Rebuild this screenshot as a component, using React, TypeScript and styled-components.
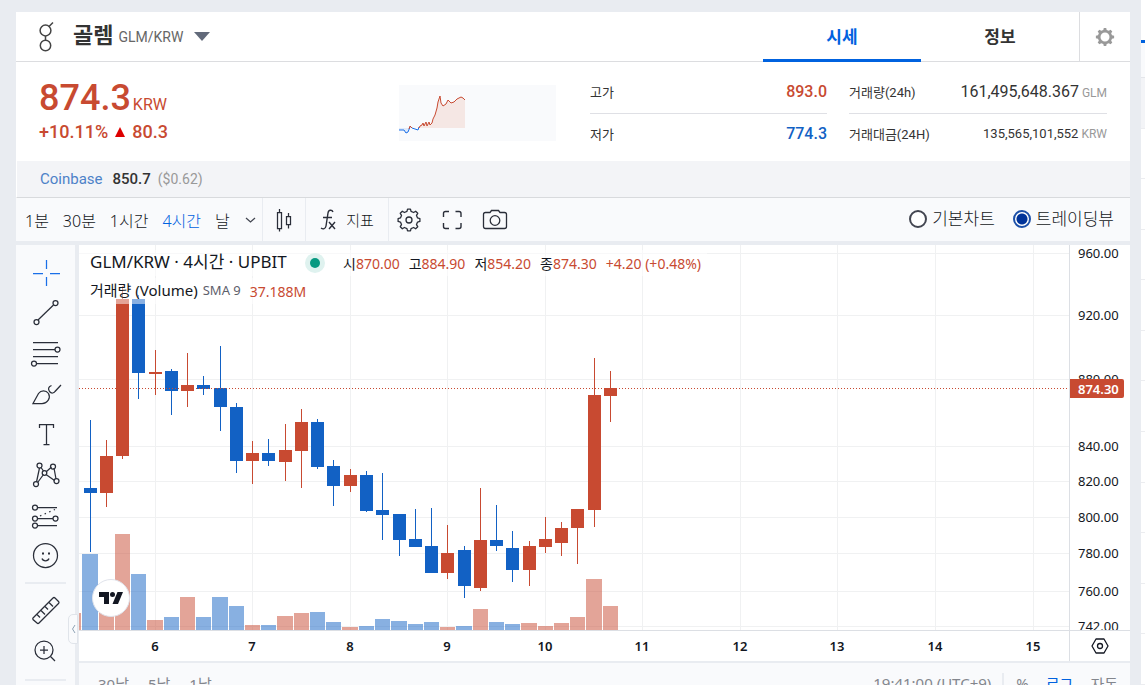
import React from 'react';
import styled, { createGlobalStyle } from 'styled-components';

const RED = '#c84a31';
const BLUE = '#1261c4';
const ROBOTO = `Roboto, "Noto Sans CJK KR", sans-serif`;
const CHART_FONT = `"Noto Sans", "Noto Sans CJK KR", sans-serif`;

const GlobalStyle = createGlobalStyle`
  *, *::before, *::after { box-sizing: border-box; }
  body { margin: 0; background: #e9ecf1; font-family: ${ROBOTO}; color: #333; }
  button { font: inherit; color: inherit; background: none; border: 0; padding: 0; cursor: pointer; }
  svg { display: block; flex: none; }
`;

const Page = styled.div`
  display: flex;
  gap: 11px;
  height: 100vh;
  padding-left: 16px;
  overflow: hidden;
`;

const Main = styled.main`
  flex: 1;
  min-width: 0;
  margin-top: 12px;
`;

/* ---------- header ---------- */

const Header = styled.header`
  display: flex;
  height: 50px;
  background: #fff;
  border-bottom: 1px solid #dcdde0;
`;

const CoinButton = styled.button`
  display: flex;
  align-items: center;
  height: 49px;
  padding-left: 20px;
  margin-right: auto;
`;

const CoinName = styled.strong`
  margin: 0 5px 2px 17px;
  font-size: 22px;
  line-height: 28px;
  font-weight: 700;
  color: #333;
`;

const CoinPair = styled.span`
  margin-right: 11px;
  font-size: 14px;
  color: #666;
`;

const Tabs = styled.nav`
  display: flex;
`;

const Tab = styled.button<{ $active?: boolean }>`
  width: 158px;
  height: 50px;
  font-size: 17px;
  font-weight: 700;
  color: ${(p) => (p.$active ? '#0062df' : '#333')};
  border-bottom: 3px solid ${(p) => (p.$active ? '#0062df' : 'transparent')};
`;

const SettingsButton = styled.button`
  display: flex;
  align-items: center;
  justify-content: center;
  width: 51px;
  height: 49px;
  border-left: 1px solid #dcdde0;
`;

/* ---------- price summary ---------- */

const Summary = styled.section`
  display: flex;
  height: 99px;
  padding: 0 23px;
  background: #fff;
`;

const PriceBlock = styled.div`
  flex: 1;
  padding-top: 15px;
  color: ${RED};
  white-space: nowrap;
`;

const Price = styled.div`
  font-size: 36px;
  line-height: 42px;
  font-weight: 500;
`;

const Unit = styled.span`
  margin-left: 2px;
  font-size: 16px;
  line-height: 16px;
  font-weight: 400;
`;

const Change = styled.div`
  display: flex;
  align-items: center;
  gap: 7px;
  font-size: 18px;
  line-height: 26px;
  font-weight: 500;
`;

const SparkBox = styled.div`
  width: 157px;
  height: 56px;
  margin-top: 23px;
  background: #f9fafc;
`;

const Stats = styled.dl<{ $width: number; $gap: number }>`
  width: ${(p) => p.$width}px;
  margin: 10px 0 0 ${(p) => p.$gap}px;
`;

const Stat = styled.div`
  display: flex;
  align-items: center;
  justify-content: space-between;
  height: 42px;
  padding-bottom: 3px;
  &:first-child { border-bottom: 1px solid #dfe0e5; }
`;

const StatName = styled.dt`
  font-size: 13px;
  color: #333;
`;

const StatValue = styled.dd<{ $color?: string; $small?: boolean }>`
  margin: 0;
  font-size: ${(p) => (p.$small ? 13 : 16)}px;
  font-weight: ${(p) => (p.$color ? 500 : 400)};
  color: ${(p) => p.$color ?? '#333'};
`;

const StatUnit = styled.small`
  margin-left: 3px;
  font-size: 12px;
  color: #999;
`;

const Reference = styled.div`
  display: flex;
  align-items: center;
  height: 37px;
  padding-left: 23px;
  background: #f3f4f7;
  border-left: 1px solid #fff;
  border-bottom: 1px solid #d8dadd;
  font-size: 15px;
`;

const Exchange = styled.a`
  color: #4d82c8;
  font-size: 15px;
  text-decoration: none;
`;

const RefPrice = styled.b`
  margin: 0 7px 0 10px;
  font-weight: 500;
  font-size: 15px;
`;

const RefUsd = styled.span`
  font-size: 14px;
  color: #999;
`;

/* ---------- chart toolbar ---------- */

const Toolbar = styled.div`
  display: flex;
  align-items: center;
  height: 43px;
  background: #f9fafc;
  font-family: ${CHART_FONT};
  font-size: 16px;
  font-weight: 300;
  color: #131722;
`;

const Intervals = styled.div`
  display: flex;
  align-items: center;
  gap: 14px;
  width: 246px;
  padding-left: 9px;
  white-space: nowrap;
`;

const Interval = styled.button<{ $active?: boolean }>`
  color: ${(p) => (p.$active ? '#0062df' : '#131722')};
`;

const ToolGroup = styled.div<{ $width: number }>`
  display: flex;
  align-items: center;
  justify-content: center;
  gap: 12px;
  width: ${(p) => p.$width}px;
  height: 43px;
  border-left: 1px solid #e9ecf1;
`;

const ToolButton = styled.button`
  display: flex;
  align-items: center;
  gap: 9px;
  font-size: 15px;
`;

const ChartModes = styled.div`
  display: flex;
  gap: 18px;
  margin-left: auto;
  padding-right: 16px;
`;

const Mode = styled.label`
  display: flex;
  align-items: center;
  gap: 5px;
  font-size: 17px;
  line-height: 20px;
  padding-bottom: 2px;
  white-space: nowrap;
`;

const Radio = styled.input`
  appearance: none;
  width: 18px;
  height: 18px;
  margin: 0;
  border: 2px solid #434651;
  border-radius: 50%;
  background: #fff;
  &:checked {
    border-color: #1b4fa8;
    background: radial-gradient(circle, #003399 5px, #fff 6px);
  }
`;

/* ---------- chart ---------- */

const Workspace = styled.div`
  display: flex;
  align-items: flex-start;
  gap: 4px;
  margin-top: 4px;
`;

const Rail = styled.div`
  position: relative;
  display: flex;
  flex-direction: column;
  width: 59px;
  height: 480px;
  padding-top: 8px;
  background: #f9fafc;
`;

const RailButton = styled.button`
  width: 59px;
  height: 40px;
`;

const RailRule = styled.hr`
  width: 41px;
  height: 2px;
  margin: 9px 0 6px 9px;
  border: 0;
  background: #e9ecf1;
`;

const Collapse = styled.button`
  position: absolute;
  left: 52px;
  top: 369px;
  display: flex;
  align-items: center;
  justify-content: center;
  width: 10px;
  height: 30px;
  border: 1px solid #e0e4ea;
  border-radius: 5px 0 0 5px;
  background: #f9fafc;
`;

const ChartColumn = styled.div`
  flex: 1;
  min-width: 0;
  font-family: ${CHART_FONT};
`;

const ChartGrid = styled.div`
  position: relative;
  display: grid;
  grid-template-columns: minmax(0, 1fr) 61px;
  grid-template-rows: 385px 31px;
  background: #fff;
`;

const PriceAxis = styled.div`
  border-left: 1px solid #dcdfe4;
`;

const TimeAxis = styled.div`
  border-top: 1px solid #dcdfe4;
`;

const AxisCorner = styled.button`
  display: flex;
  align-items: center;
  justify-content: center;
  border-top: 1px solid #dcdfe4;
  border-left: 1px solid #dcdfe4;
`;

const Legend = styled.div`
  position: absolute;
  left: 0;
  top: 5px;
  display: flex;
  flex-direction: column;
  align-items: flex-start;
  gap: 2px;
  white-space: nowrap;
  color: #131722;
`;

const LegendRow = styled.div`
  display: flex;
  align-items: center;
  height: 26px;
  padding: 0 6px 0 11px;
  background: rgba(255, 255, 255, 0.5);
  font-size: 14px;
`;

const Symbol = styled.span`
  width: 215px;
  padding-bottom: 2px;
  font-size: 17px;
  line-height: 22px;
`;

const Ohlc = styled.span`
  display: flex;
  align-items: baseline;
  gap: 9px;
  margin-left: 18px;
`;

const Red = styled.span`
  color: ${RED};
`;

const StudyName = styled.span`
  font-size: 15px;
  line-height: 20px;
  padding-bottom: 2px;
`;

const Indicator = styled.span`
  margin: 0 9px 3px 5px;
  font-size: 13px;
  color: #5d606b;
`;

const Watermark = styled.a`
  position: absolute;
  left: 13px;
  top: 334px;
  display: flex;
  align-items: center;
  justify-content: center;
  width: 38px;
  height: 38px;
  border: 1px solid #e0e3eb;
  border-radius: 50%;
  background: #fff;
`;

const Footer = styled.footer`
  display: flex;
  align-items: center;
  height: 42px;
  padding: 0 12px 0 19px;
  background: #f9fafc;
  border-top: 2px solid #e9ecf1;
  font-size: 15px;
  color: #83868d;
  white-space: nowrap;
`;

const Ranges = styled.div`
  display: flex;
  gap: 19px;
  margin-right: auto;
`;

const Scales = styled.div`
  display: flex;
  gap: 17px;
  margin-left: 11px;
  padding-left: 12px;
  border-left: 2px solid #e9ecf1;
`;

const ScaleButton = styled.button<{ $active?: boolean }>`
  color: ${(p) => (p.$active ? '#0062df' : 'inherit')};
`;

/* ---------- market list at the right edge ---------- */

const Market = styled.aside`
  display: flex;
  flex-direction: column;
  flex: 0 0 4px;
  background: #fff;
`;

const MarketTab = styled.div`
  height: 43px;
  border-bottom: 3px solid #0062df;
`;

const MarketFilter = styled.div`
  height: 35px;
  background: #f9fafc;
  border-bottom: 1px solid #e4e6ea;
`;

const MarketRow = styled.div<{ $current?: boolean }>`
  flex: 1;
  background: ${(p) => (p.$current ? '#f3f4f7' : '#fff')};
  border-bottom: 1px solid #ecedf0;
`;

/* ---------- data ---------- */

type Candle = [x: number, up: 0 | 1, high: number, top: number, bottom: number, low: number, volume: number];

// x centre, direction, wick top, body top, body bottom, wick bottom, volume bar top
const CANDLES: Candle[] = [
  [11, 0, 175, 243, 248, 307, 309],
  [27, 1, 195, 211, 248, 262, 357],
  [43, 1, 41, 54, 211, 214, 289],
  [59, 0, 50, 54, 128, 154, 329],
  [76, 1, 105, 127, 129, 150, 375],
  [92, 0, 124, 126, 146, 170, 372],
  [108, 1, 108, 140, 146, 162, 352],
  [124, 0, 131, 140, 144, 150, 372],
  [141, 0, 101, 143, 162, 186, 352],
  [157, 0, 158, 162, 216, 228, 361],
  [173, 1, 196, 208, 216, 239, 380],
  [189, 0, 194, 208, 216, 221, 380],
  [206, 1, 179, 205, 217, 236, 371],
  [222, 1, 164, 177, 206, 243, 368],
  [238, 0, 174, 177, 222, 224, 367],
  [254, 0, 215, 221, 241, 261, 377],
  [271, 1, 224, 230, 241, 247, 382],
  [287, 0, 226, 230, 266, 267, 381],
  [303, 0, 228, 265, 270, 295, 374],
  [320, 0, 269, 269, 295, 311, 376],
  [336, 0, 264, 294, 302, 302, 379],
  [352, 0, 263, 301, 328, 328, 377],
  [368, 1, 280, 308, 328, 334, 382],
  [385, 0, 301, 305, 341, 353, 381],
  [401, 1, 243, 295, 343, 346, 364],
  [417, 0, 260, 295, 301, 306, 377],
  [433, 0, 286, 303, 325, 337, 379],
  [450, 1, 296, 301, 325, 341, 378],
  [466, 1, 272, 294, 302, 308, 381],
  [482, 1, 277, 283, 298, 311, 378],
  [498, 1, 264, 264, 283, 319, 372],
  [515, 1, 113, 150, 265, 282, 334],
  [531, 1, 126, 143, 151, 177, 361],
];

const PRICES: [string, number][] = [
  ['960.00', 8], ['920.00', 70], ['880.00', 134], ['840.00', 201], ['820.00', 236],
  ['800.00', 272], ['780.00', 308], ['760.00', 346], ['742.00', 381],
];

const DAYS: [string, number][] = [
  ['6', 76], ['7', 173], ['8', 271], ['9', 368], ['10', 466],
  ['11', 563], ['12', 661], ['13', 758], ['14', 856], ['15', 954],
];

function CandleChart() {
  return (
    <svg width="100%" height="385" shapeRendering="crispEdges" role="img" aria-label="GLM/KRW">
      {PRICES.map(([p, y]) => <rect key={p} x="0" y={y} width="100%" height="1" fill="#f0f1f2" />)}
      {DAYS.map(([d, x]) => <rect key={d} x={x} y="0" width="1" height="385" fill="#f0f1f2" />)}
      {CANDLES.map(([x, up, high, top, bottom, low]) => (
        <g key={x} fill={up ? RED : BLUE}>
          <rect x={x} y={high} width="1" height={low - high} />
          <rect x={x - 6} y={top} width="13" height={bottom - top} />
        </g>
      ))}
      <rect x="0" y="368" width="2" height="17" fill={RED} opacity="0.5" />
      {CANDLES.map(([x, up, , , , , volume], i) => {
        const left = i ? CANDLES[i - 1][0] + 9 : 3;
        return (
          <rect key={x} x={left} y={volume} width={x + 8 - left} height={385 - volume} fill={up ? RED : BLUE} opacity="0.5" />
        );
      })}
      <line x1="0" x2="100%" y1="143.5" y2="143.5" stroke={RED} strokeDasharray="1 2" />
    </svg>
  );
}

function PriceScale() {
  return (
    <svg width="60" height="385" fontSize="13" fill="#131722">
      {PRICES.map(([p, y]) => <text key={p} x="8" y={y + 5}>{p}</text>)}
      <path d="M0 134h52a2 2 0 0 1 2 2v15a2 2 0 0 1-2 2H0z" fill={RED} />
      <text x="8" y="149" fill="#fff" fontWeight="600">874.30</text>
    </svg>
  );
}

function TimeScale() {
  return (
    <svg width="100%" height="30" fontSize="13" fontWeight="600" fill="#131722" textAnchor="middle">
      {DAYS.map(([d, x]) => <text key={d} x={x} y="20">{d}</text>)}
    </svg>
  );
}

function Sparkline() {
  return (
    <svg width="157" height="56" fill="none">
      <path d="M21 43V41L23 39L25 40L27 37L28 41L30 37L31 40L33 38L35 33L37 27L39 17L41 11L42 18L44 21L47 19L49 15L52 18L55 17L58 14L62 12L64 13L66 15V43z" fill="#f5e7e4" />
      <path d="M0 43V45H5L7 48L9 47L11 43z" fill="#dfeafa" />
      <path d="M0 45H5L7 48L9 47L11 42M13 43L16 44L19 45L20 42" stroke="#1a6fe8" />
      <path d="M10 44L11 41L13 43M20 43L21 41L23 40L24 38L25 41L27 37L28 41L30 37L31 40L33 38L34 34L36 30L38 23L39 17L41 11L42 18L44 21L47 19L49 15L52 18L55 17L58 14L62 12L64 13L66 15" stroke={RED} />
    </svg>
  );
}

function GolemIcon() {
  return (
    <svg width="20" height="32" viewBox="0 0 20 32" fill="none" stroke="#444" strokeWidth="1.500">
      <circle cx="9.500" cy="9.500" r="5.400" />
      <circle cx="9.500" cy="24.500" r="5.200" />
      <path d="M9.500 15v4.500M13 5.500L17 1.500" />
    </svg>
  );
}

function gearPath(cx: number, cy: number, teeth: number, outer: number, inner: number) {
  const points: string[] = [];
  const step = (Math.PI * 2) / teeth;
  for (let i = 0; i < teeth; i++) {
    const a = i * step - Math.PI / 2;
    [[-0.3, inner], [-0.17, outer], [0.17, outer], [0.3, inner]].forEach(([k, r]) => {
      points.push(`${(cx + r * Math.cos(a + k * step)).toFixed(2)} ${(cy + r * Math.sin(a + k * step)).toFixed(2)}`);
    });
  }
  return `M${points.join('L')}z`;
}

// Each glyph is drawn in a 59x40 button area.
const DRAWING_TOOLS: [string, React.ReactNode][] = [
  ['십자선', <path key="a" stroke="#1a6fe8" d="M30.500 7v9M30.500 24v9M17 20.500h10M34 20.500h10" />],
  ['추세선', <g key="b"><path d="M22 27L37.500 12" /><circle cx="20.500" cy="29" r="2.500" /><circle cx="39.500" cy="10" r="2.500" /></g>],
  ['피보나치', <g key="c"><path d="M17 9.500h25M17 16.500h22M17 23.500h25M20 30.500h22" /><circle cx="41.500" cy="16.500" r="2.500" /><circle cx="18" cy="30.500" r="2.500" /></g>],
  ['브러시', <path key="d" d="M17 30.500L22.500 20.500C25 17 30 17 32.500 20.500C35 25 31.500 30.500 26 30.500zM35.500 12.500C32 14 32 16 33.500 18.500C35.500 21 38 20 39 18.500L45 12" />],
  ['텍스트', <path key="e" d="M23.500 15v-3.500h14V15M30.500 11.500v19.500M27.500 31.500h6" />],
  ['패턴', <g key="f"><path d="M23.500 15L20.500 29M25 14.500L27.500 18M30.500 18.500L35.500 14M38 15L40 26M38.500 27.500L30 21.500M22 29L27.500 21.500" /><circle cx="23.500" cy="12.500" r="2.500" /><circle cx="37" cy="13.500" r="2.500" /><circle cx="28.500" cy="20" r="2.300" /><circle cx="20" cy="31" r="2.500" /><circle cx="40.500" cy="28" r="2.500" /></g>],
  ['예측', <g key="g"><path d="M21.500 14.500H41M21.500 25.500H37M21.500 32.500H41" /><path d="M24 23L39 16.500" strokeDasharray="1.500 3.500" /><circle cx="19" cy="14.500" r="2.500" /><circle cx="19" cy="25.500" r="2.500" /><circle cx="39.500" cy="25.500" r="2.500" /><circle cx="19" cy="32.500" r="2.500" /></g>],
  ['아이콘', <g key="h"><circle cx="29.500" cy="22.500" r="12" /><path d="M26 25.500c1 3 6 3 7 0" /><path d="M26 20.500h2M32 20.500h2" strokeWidth="2" /></g>],
];

const MEASURE_TOOLS: [string, React.ReactNode][] = [
  ['측정', <path key="a" d="M17 28L37 8Q38 7 39 8L42.500 11.500Q43.500 12.500 42.500 13.500L23 33Q22 34 21 33L17 29.500Q16.500 28.500 17 28zM21 24.500l3 3M25 20.500l4 4M29 16.500l3 3M33 12.500l4 4" />],
  ['확대', <g key="b"><circle cx="28" cy="20" r="9" /><path d="M24 20h8M28 16v8M34.500 26.500L39 31" /></g>],
];

function RailTool({ name, children }: { name: string; children: React.ReactNode }) {
  return (
    <RailButton type="button" aria-label={name}>
      <svg width="59" height="40" fill="none" stroke="#2a2e39" strokeWidth="1.250">{children}</svg>
    </RailButton>
  );
}

export default function App() {
  return (
    <Page>
      <GlobalStyle />
      <Main>
        <Header>
          <CoinButton type="button">
            <GolemIcon />
            <CoinName>골렘</CoinName>
            <CoinPair>GLM/KRW</CoinPair>
            <svg width="16" height="9"><path d="M0 0h16L8 9z" fill="#626a7a" /></svg>
          </CoinButton>
          <Tabs>
            <Tab type="button" $active>시세</Tab>
            <Tab type="button">정보</Tab>
          </Tabs>
          <SettingsButton type="button" aria-label="설정">
            <svg width="20" height="20">
              <path fillRule="evenodd" fill="#999" d={`${gearPath(10, 10, 8, 9.2, 7.2)}M10 5.500a4.500 4.500 0 1 0 0 9a4.500 4.500 0 1 0 0-9z`} />
            </svg>
          </SettingsButton>
        </Header>

        <Summary>
          <PriceBlock>
            <Price>874.3<Unit>KRW</Unit></Price>
            <Change>
              <span>+10.11%</span>
              <svg width="10" height="10"><path d="M5 0l5 10H0z" fill="#dd0000" /></svg>
              <span>80.3</span>
            </Change>
          </PriceBlock>
          <SparkBox><Sparkline /></SparkBox>
          <Stats $width={237} $gap={34}>
            <Stat><StatName>고가</StatName><StatValue $color={RED}>893.0</StatValue></Stat>
            <Stat><StatName>저가</StatName><StatValue $color={BLUE}>774.3</StatValue></Stat>
          </Stats>
          <Stats $width={258} $gap={22}>
            <Stat><StatName>거래량(24h)</StatName><StatValue>161,495,648.367<StatUnit>GLM</StatUnit></StatValue></Stat>
            <Stat><StatName>거래대금(24H)</StatName><StatValue $small>135,565,101,552<StatUnit>KRW</StatUnit></StatValue></Stat>
          </Stats>
        </Summary>

        <Reference>
          <Exchange href="#coinbase">Coinbase</Exchange>
          <RefPrice>850.7</RefPrice>
          <RefUsd>($0.62)</RefUsd>
        </Reference>

        <Toolbar>
          <Intervals>
            <Interval type="button">1분</Interval>
            <Interval type="button">30분</Interval>
            <Interval type="button">1시간</Interval>
            <Interval type="button" $active>4시간</Interval>
            <Interval type="button">날</Interval>
            <ToolButton type="button" aria-label="시간 간격">
              <svg width="12" height="8" fill="none" stroke="#434651" strokeWidth="1.250"><path d="M2 2l4.500 4L11 2" /></svg>
            </ToolButton>
          </Intervals>
          <ToolGroup $width={43}>
            <ToolButton type="button" aria-label="캔들">
              <svg width="18" height="24" fill="none" stroke="#2a2e39" strokeWidth="1.250">
                <path d="M2.500 4.500h4v16h-4zM4.500 1v3.500M4.500 20.500v3M11.500 8.500h4v8h-4zM13.500 5v3.500M13.500 16.500v4" />
              </svg>
            </ToolButton>
          </ToolGroup>
          <ToolGroup $width={83}>
            <ToolButton type="button">
              <svg width="17" height="22" fill="none" stroke="#2a2e39" strokeWidth="1.400">
                <path d="M13 3C12 .5 8.500 .5 8 4L6 17C5.500 20 3 20.500 1 19M3 8.500h9M9 13l6 7M15 13l-6 7" />
              </svg>
              지표
            </ToolButton>
          </ToolGroup>
          <ToolGroup $width={127}>
            <ToolButton type="button" aria-label="차트 설정">
              <svg width="26" height="26" fill="none" stroke="#2a2e39" strokeWidth="1.300" strokeLinejoin="round">
                <path d={gearPath(13, 13, 8, 11, 8.800)} />
                <circle cx="13" cy="13" r="3" />
              </svg>
            </ToolButton>
            <ToolButton type="button" aria-label="전체 화면">
              <svg width="36" height="22" fill="none" stroke="#2a2e39" strokeWidth="1.400">
                <path d="M9.500 8V4.500q0-2 2-2H15M21.500 2.500H25q2 0 2 2V8M27 14v3.500q0 2-2 2h-3.500M15 19.500h-3.500q-2 0-2-2V14" />
              </svg>
            </ToolButton>
            <ToolButton type="button" aria-label="스냅샷">
              <svg width="26" height="22" fill="none" stroke="#2a2e39" strokeWidth="1.300">
                <path d="M1.500 5.500q0-2 2-2H8L9.500 1.500h7L18 3.500h4.500q2 0 2 2v12q0 2-2 2h-19q-2 0-2-2z" />
                <circle cx="13" cy="11.500" r="4.800" />
              </svg>
            </ToolButton>
          </ToolGroup>
          <ChartModes>
            <Mode><Radio type="radio" name="mode" />기본차트</Mode>
            <Mode><Radio type="radio" name="mode" defaultChecked />트레이딩뷰</Mode>
          </ChartModes>
        </Toolbar>

        <Workspace>
          <Rail>
            {DRAWING_TOOLS.map(([name, glyph]) => <RailTool key={name} name={name}>{glyph}</RailTool>)}
            <RailRule />
            {MEASURE_TOOLS.map(([name, glyph]) => <RailTool key={name} name={name}>{glyph}</RailTool>)}
            <RailRule />
            <Collapse type="button" aria-label="접기">
              <svg width="5" height="10" fill="none" stroke="#8fa3b5"><path d="M4 1L1.500 5L4 9" /></svg>
            </Collapse>
          </Rail>
          <ChartColumn>
            <ChartGrid>
              <CandleChart />
              <PriceAxis><PriceScale /></PriceAxis>
              <TimeAxis><TimeScale /></TimeAxis>
              <AxisCorner type="button" aria-label="축 설정">
                <svg width="20" height="18" fill="none" stroke="#131722" strokeWidth="1.300">
                  <path d="M6 2h8l4 7l-4 7H6L2 9z" strokeLinejoin="round" />
                  <circle cx="10" cy="9" r="2.500" />
                </svg>
              </AxisCorner>
              <Legend>
                <LegendRow>
                  <Symbol>GLM/KRW · 4시간 · UPBIT</Symbol>
                  <svg width="20" height="20">
                    <circle cx="10" cy="10" r="10" fill="#dff2ef" />
                    <circle cx="10" cy="10" r="5" fill="#089981" />
                  </svg>
                  <Ohlc>
                    <span>시<Red>870.00</Red></span>
                    <span>고<Red>884.90</Red></span>
                    <span>저<Red>854.20</Red></span>
                    <span>종<Red>874.30</Red></span>
                    <Red>+4.20 (+0.48%)</Red>
                  </Ohlc>
                </LegendRow>
                <LegendRow>
                  <StudyName>거래량 (Volume)</StudyName>
                  <Indicator>SMA 9</Indicator>
                  <Red>37.188M</Red>
                </LegendRow>
              </Legend>
              <Watermark href="#tradingview" aria-label="TradingView">
                <svg width="26" height="14" fill="#131722">
                  <path d="M1 1h10v12H6V6H1z" />
                  <circle cx="14.500" cy="3.500" r="2.500" />
                  <path d="M19.500 1H25l-5 12h-5.500z" />
                </svg>
              </Watermark>
            </ChartGrid>
            <Footer>
              <Ranges>
                <ScaleButton type="button">30날</ScaleButton>
                <ScaleButton type="button">5날</ScaleButton>
                <ScaleButton type="button">1날</ScaleButton>
              </Ranges>
              <span>19:41:00 (UTC+9)</span>
              <Scales>
                <ScaleButton type="button">%</ScaleButton>
                <ScaleButton type="button" $active>로그</ScaleButton>
                <ScaleButton type="button">자동</ScaleButton>
              </Scales>
            </Footer>
          </ChartColumn>
        </Workspace>
      </Main>
      <Market>
        <MarketTab />
        <MarketFilter />
        {Array.from({ length: 12 }, (_, i) => <MarketRow key={i} $current={i === 0} />)}
      </Market>
    </Page>
  );
}
